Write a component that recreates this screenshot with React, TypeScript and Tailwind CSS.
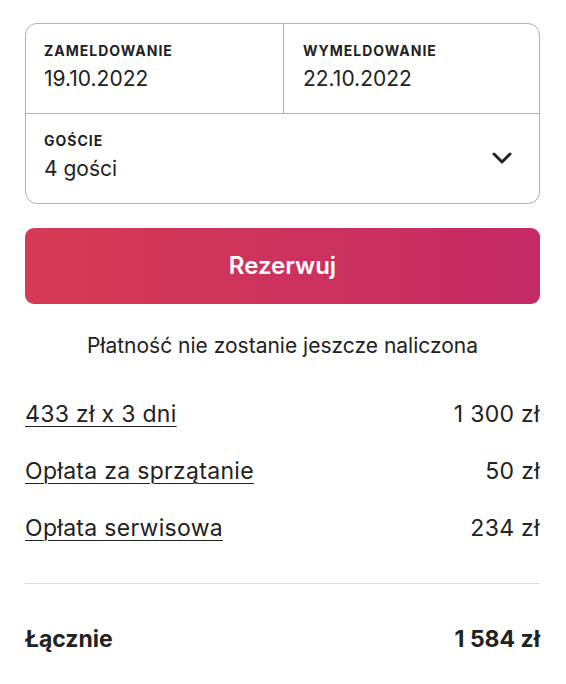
import React from "react";

export default function App() {
  const rows = [
    ["433 zł x 3 dni", "1 300 zł"],
    ["Opłata za sprzątanie", "50 zł"],
    ["Opłata serwisowa", "234 zł"],
  ];
  return (
    <div className="w-[566px] h-[684px] bg-white text-[#222222]" style={{ fontFamily: "Inter, 'Noto Sans', sans-serif" }}>
      <div className="ml-[25px] w-[515px] pt-[23px]">
        <div className="border border-[#b0b0b0] rounded-[12px] overflow-hidden">
          <div className="flex h-[90px] border-b border-[#b0b0b0]">
            <div className="w-[258px] border-r border-[#b0b0b0] pl-[18px] pt-[18px]">
              <div className="text-[14px] font-bold leading-[18px] tracking-[1px]">ZAMELDOWANIE</div>
              <div className="text-[21px] leading-[28px] mt-[5px]">19.10.2022</div>
            </div>
            <div className="flex-1 pl-[19px] pt-[18px]">
              <div className="text-[14px] font-bold leading-[18px] tracking-[1px]">WYMELDOWANIE</div>
              <div className="text-[21px] leading-[28px] mt-[5px]">22.10.2022</div>
            </div>
          </div>
          <div className="flex h-[89px] items-start justify-between pl-[18px] pr-[27px]">
            <div className="pt-[18px]">
              <div className="text-[14px] font-bold leading-[18px] tracking-[1px]">GOŚCIE</div>
              <div className="text-[21px] leading-[28px] mt-[5px]">4 gości</div>
            </div>
            <svg width="20" height="12" viewBox="0 0 20 12" fill="none" className="mt-[38px]">
              <path d="M2 2 L10 10 L18 2" stroke="#222222" strokeWidth="3" strokeLinecap="round" strokeLinejoin="round" />
            </svg>
          </div>
        </div>

        <button className="mt-[24px] w-full h-[76px] rounded-[9px] text-white text-[24px] font-semibold bg-gradient-to-r from-[#d63a55] to-[#c42a64]">
          Rezerwuj
        </button>

        <div className="mt-[28px] text-center text-[21px] leading-[28px]">Płatność nie zostanie jeszcze naliczona</div>

        <div className="mt-[39px] flex flex-col gap-[27px]">
          {rows.map(([l, r]) => (
            <div key={l} className="flex justify-between text-[23px] leading-[30px] tracking-[0.3px]">
              <span className="underline underline-offset-[4px] decoration-[1px]">{l}</span>
              <span>{r}</span>
            </div>
          ))}
        </div>

        <div className="mt-[40px] border-t border-[#dddddd]" />

        <div className="mt-[40px] flex justify-between text-[23px] leading-[30px] font-bold">
          <span>Łącznie</span>
          <span>1 584 zł</span>
        </div>
      </div>
    </div>
  );
}
